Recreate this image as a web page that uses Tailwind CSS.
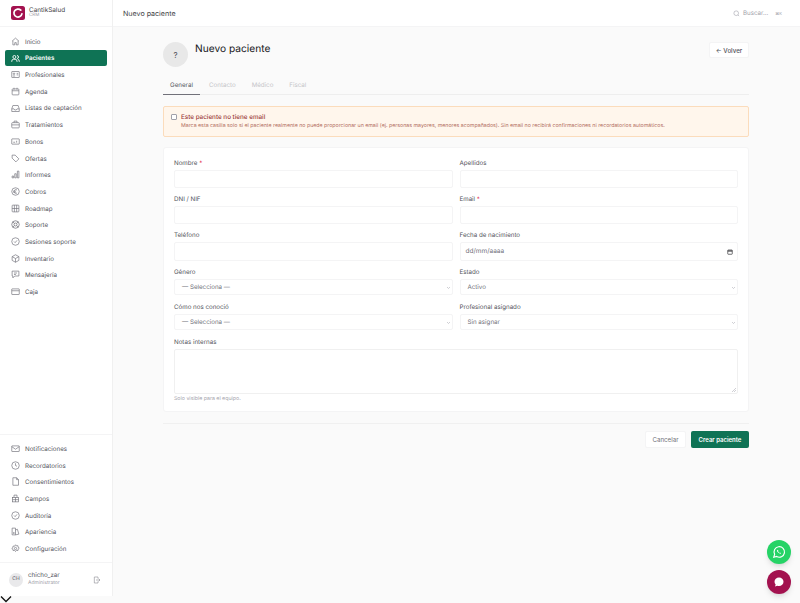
<!DOCTYPE html>
<html lang="es">
<head>
    <meta charset="UTF-8">
    <title>Nuevo paciente</title>
    <script src="https://cdn.jsdelivr.net/npm/@tailwindcss/browser@4"></script>
</head>
<body class="h-[603px] w-[800px] overflow-hidden bg-[#fafafa] font-['Inter',sans-serif] text-[#3f3f46] antialiased [text-rendering:geometricPrecision]">
<div class="flex h-full">
    <!-- Sidebar -->
    <aside class="flex h-[596px] w-[113px] shrink-0 flex-col border-r border-[#f0f0f0] bg-white">
        <div class="flex h-[27px] shrink-0 items-center gap-[4px] border-b border-[#f4f4f5] pl-[11px]">
            <svg class="h-[14px] w-[14px]" viewBox="0 0 14 14"><rect width="14" height="14" rx="2.5" fill="#a3124f"/><path d="M9.8 4.2A4 4 0 1 0 10.9 7.8" fill="none" stroke="#fff" stroke-width="1.7" stroke-linecap="round"/></svg>
            <div class="leading-none">
                <div class="text-[6.4px] text-[#3f3f46]">CantikSalud</div>
                <div class="mt-[1px] text-[4.5px] text-[#a1a1aa]">CRM</div>
            </div>
        </div>
        <nav class="flex shrink-0 flex-col px-[5px] pt-[6px] text-[6.2px] text-[#52525b] [&>a]:pt-[2px] [&_svg]:-translate-y-[1px]">
            <a class="flex h-[16.7px] items-center gap-[5.5px] pl-[5.5px]"><svg class="h-[9px] w-[9px]" viewBox="0 0 24 24" fill="none" stroke="#71717a" stroke-width="1.8"><path d="M3 11l9-8 9 8M5 10v11h5v-6h4v6h5V10"/></svg>Inicio</a>
            <a class="flex h-[16.7px] items-center gap-[5.5px] rounded-[2px] bg-[#0f7355] pl-[5.5px] font-semibold text-white"><svg class="h-[9px] w-[9px]" viewBox="0 0 24 24" fill="none" stroke="#fff" stroke-width="2.4"><circle cx="9" cy="8" r="4"/><path d="M2 21v-2a5 5 0 0 1 5-5h4a5 5 0 0 1 5 5v2M16 4a4 4 0 0 1 0 8M18 14a5 5 0 0 1 4 5v2"/></svg>Pacientes</a>
            <a class="flex h-[16.7px] items-center gap-[5.5px] pl-[5.5px]"><svg class="h-[9px] w-[9px]" viewBox="0 0 24 24" fill="none" stroke="#71717a" stroke-width="1.8"><rect x="2" y="4" width="20" height="16" rx="1"/><circle cx="8" cy="10" r="2"/><path d="M5 16h6M15 9h4M15 13h4"/></svg>Profesionales</a>
            <a class="flex h-[16.7px] items-center gap-[5.5px] pl-[5.5px]"><svg class="h-[9px] w-[9px]" viewBox="0 0 24 24" fill="none" stroke="#71717a" stroke-width="1.8"><rect x="3" y="5" width="18" height="16" rx="2"/><path d="M3 10h18M8 2v5M16 2v5"/></svg>Agenda</a>
            <a class="flex h-[16.7px] items-center gap-[5.5px] pl-[5.5px]"><svg class="h-[9px] w-[9px]" viewBox="0 0 24 24" fill="none" stroke="#71717a" stroke-width="1.8"><path d="M5 4h14l3 9v7H2v-7zM2 13h6l2 3h4l2-3h6"/></svg>Listas de captación</a>
            <a class="flex h-[16.7px] items-center gap-[5.5px] pl-[5.5px]"><svg class="h-[9px] w-[9px]" viewBox="0 0 24 24" fill="none" stroke="#71717a" stroke-width="1.8"><rect x="2" y="7" width="20" height="14" rx="2"/><path d="M8 7V3h8v4M2 13h20"/></svg>Tratamientos</a>
            <a class="flex h-[16.7px] items-center gap-[5.5px] pl-[5.5px]"><svg class="h-[9px] w-[9px]" viewBox="0 0 24 24" fill="none" stroke="#71717a" stroke-width="1.8"><rect x="2" y="5" width="20" height="14" rx="1"/><path d="M6 14h5M15 10v5"/></svg>Bonos</a>
            <a class="flex h-[16.7px] items-center gap-[5.5px] pl-[5.5px]"><svg class="h-[9px] w-[9px]" viewBox="0 0 24 24" fill="none" stroke="#71717a" stroke-width="1.8"><path d="M3 3h8l10 10-8 8L3 11zM7.5 7.5h.01"/></svg>Ofertas</a>
            <a class="flex h-[16.7px] items-center gap-[5.5px] pl-[5.5px]"><svg class="h-[9px] w-[9px]" viewBox="0 0 24 24" fill="none" stroke="#71717a" stroke-width="1.8"><path d="M3 21v-5h4v5zM10 21V10h4v11zM17 21V3h4v18z"/></svg>Informes</a>
            <a class="flex h-[16.7px] items-center gap-[5.5px] pl-[5.5px]"><svg class="h-[9px] w-[9px]" viewBox="0 0 24 24" fill="none" stroke="#71717a" stroke-width="1.8"><circle cx="12" cy="12" r="10"/><path d="M16 8a5 5 0 1 0 0 8M6 11h7M6 14h7"/></svg>Cobros</a>
            <a class="flex h-[16.7px] items-center gap-[5.5px] pl-[5.5px]"><svg class="h-[9px] w-[9px]" viewBox="0 0 24 24" fill="none" stroke="#71717a" stroke-width="1.8"><rect x="3" y="3" width="18" height="18" rx="2"/><path d="M9 3v18M15 3v18M3 12h18"/></svg>Roadmap</a>
            <a class="flex h-[16.7px] items-center gap-[5.5px] pl-[5.5px]"><svg class="h-[9px] w-[9px]" viewBox="0 0 24 24" fill="none" stroke="#71717a" stroke-width="2"><circle cx="12" cy="12" r="10"/><circle cx="12" cy="12" r="4"/><path d="M5 5l4 4M19 5l-4 4M5 19l4-4M19 19l-4-4"/></svg>Soporte</a>
            <a class="flex h-[16.7px] items-center gap-[5.5px] pl-[5.5px]"><svg class="h-[9px] w-[9px]" viewBox="0 0 24 24" fill="none" stroke="#71717a" stroke-width="1.8"><circle cx="12" cy="12" r="10"/><path d="M8 12l3 3 5-6"/></svg>Sesiones soporte</a>
            <a class="flex h-[16.7px] items-center gap-[5.5px] pl-[5.5px]"><svg class="h-[9px] w-[9px]" viewBox="0 0 24 24" fill="none" stroke="#71717a" stroke-width="1.8"><path d="M12 2l9 5v10l-9 5-9-5V7zM3 7l9 5 9-5M12 12v10"/></svg>Inventario</a>
            <a class="flex h-[16.7px] items-center gap-[5.5px] pl-[5.5px]"><svg class="h-[9px] w-[9px]" viewBox="0 0 24 24" fill="none" stroke="#71717a" stroke-width="1.8"><path d="M3 3h18v13H10l-5 5v-5H3zM8 8h8M8 12h5"/></svg>Mensajería</a>
            <a class="flex h-[16.7px] items-center gap-[5.5px] pl-[5.5px]"><svg class="h-[9px] w-[9px]" viewBox="0 0 24 24" fill="none" stroke="#71717a" stroke-width="1.8"><rect x="2" y="5" width="20" height="15" rx="1"/><path d="M2 10h20"/></svg>Caja</a>
        </nav>
        <div class="mt-auto flex flex-col border-t border-[#f4f4f5] px-[5px] pt-[5px] pb-[5px] text-[6.2px] text-[#52525b] [&>a]:pt-[2px] [&_svg]:-translate-y-[1px]">
            <a class="flex h-[16.7px] items-center gap-[5.5px] pl-[5.5px]"><svg class="h-[9px] w-[9px]" viewBox="0 0 24 24" fill="none" stroke="#71717a" stroke-width="1.8"><rect x="2" y="5" width="20" height="15" rx="1"/><path d="M2 7l10 7 10-7"/></svg>Notificaciones</a>
            <a class="flex h-[16.7px] items-center gap-[5.5px] pl-[5.5px]"><svg class="h-[9px] w-[9px]" viewBox="0 0 24 24" fill="none" stroke="#71717a" stroke-width="1.8"><circle cx="12" cy="12" r="10"/><path d="M12 6v6l4 2"/></svg>Recordatorios</a>
            <a class="flex h-[16.7px] items-center gap-[5.5px] pl-[5.5px]"><svg class="h-[9px] w-[9px]" viewBox="0 0 24 24" fill="none" stroke="#71717a" stroke-width="1.8"><path d="M5 2h10l5 5v15H5zM15 2v5h5"/></svg>Consentimientos</a>
            <a class="flex h-[16.7px] items-center gap-[5.5px] pl-[5.5px]"><svg class="h-[9px] w-[9px]" viewBox="0 0 24 24" fill="none" stroke="#71717a" stroke-width="1.8"><rect x="4" y="9" width="16" height="12"/><path d="M8 9V3h8v6M4 15h16M12 9v12"/></svg>Campos</a>
            <a class="flex h-[16.7px] items-center gap-[5.5px] pl-[5.5px]"><svg class="h-[9px] w-[9px]" viewBox="0 0 24 24" fill="none" stroke="#71717a" stroke-width="1.8"><circle cx="12" cy="12" r="10"/><path d="M8 12l3 3 5-6"/></svg>Auditoría</a>
            <a class="flex h-[16.7px] items-center gap-[5.5px] pl-[5.5px]"><svg class="h-[9px] w-[9px]" viewBox="0 0 24 24" fill="none" stroke="#71717a" stroke-width="1.8"><path d="M3 3h9v18H3zM12 8l5-2 4 13-9 2"/><circle cx="7.500" cy="16" r="1.500"/></svg>Apariencia</a>
            <a class="flex h-[16.7px] items-center gap-[5.5px] pl-[5.5px]"><svg class="h-[9px] w-[9px]" viewBox="0 0 24 24" fill="none" stroke="#71717a" stroke-width="1.8"><circle cx="12" cy="12" r="3"/><path d="M12 2l2.500 3 4-.5.500 4 3 2.500-3 2.500-.500 4-4-.500-2.500 3-2.500-3-4 .500-.500-4L2 12l3-2.500.500-4 4 .500z"/></svg>Configuración</a>
        </div>
        <div class="flex h-[34px] shrink-0 items-center border-t border-[#f4f4f5] pl-[9px] pr-[11px]">
            <div class="flex h-[14px] w-[14px] items-center justify-center rounded-full bg-[#e9e9eb] text-[5px] text-[#52525b]">CH</div>
            <div class="ml-[5px] leading-none">
                <div class="text-[6.2px] text-[#52525b]">chicho_zar</div>
                <div class="mt-[2.5px] text-[5px] text-[#a1a1aa]">Administrator</div>
            </div>
            <svg class="ml-auto h-[8px] w-[8px]" viewBox="0 0 24 24" fill="none" stroke="#8a8a92" stroke-width="1.8"><path d="M15 8V3H4v18h11v-5M9 12h12M17 8l4 4-4 4"/></svg>
        </div>
    </aside>

    <!-- Main -->
    <div class="flex min-w-0 flex-1 flex-col">
        <header class="flex h-[27px] shrink-0 items-center border-b border-[#f4f4f5] bg-white pl-[10px] pr-[18px]">
            <span class="pt-[2px] text-[7.1px] text-[#3f3f46]">Nuevo paciente</span>
            <svg class="ml-auto h-[7px] w-[7px]" viewBox="0 0 24 24" fill="none" stroke="#a1a1aa" stroke-width="2"><circle cx="11" cy="11" r="8"/><path d="M21 21l-4-4"/></svg>
            <span class="ml-[3px] pt-[2px] text-[6.2px] text-[#a1a1aa]">Buscar...</span>
            <span class="ml-[7px] pt-[2px] text-[4px] text-[#a1a1aa]">⌘K</span>
        </header>

        <main class="pl-[50px] pr-[51px]">
            <div class="flex items-start pt-[15px]">
                <div class="flex h-[25px] w-[25px] items-center justify-center rounded-full bg-[#e8e8e8] text-[8px] text-[#52525b]">?</div>
                <h1 class="ml-[7px] mt-[-1px] text-[10.2px] leading-[16px] text-[#18181b]">Nuevo paciente</h1>
                <button class="ml-auto flex h-[16px] w-[40px] items-center justify-center gap-[2px] rounded-[2px] border border-[#f4f4f5] bg-white pt-[2px] text-[6.2px] font-medium text-[#52525b]">← Volver</button>
            </div>

            <div class="mt-[12px] flex h-[16px] items-start gap-[16px] border-b border-[#eeeeee] text-[6.2px] text-[#c4c4c8]">
                <span class="mr-[-7px] h-[16px] w-[37px] border-b border-[#71717a] pt-[2px] text-center text-[#52525b]">General</span>
                <span class="pt-[2px]">Contacto</span>
                <span class="pt-[2px]">Médico</span>
                <span class="pt-[2px]">Fiscal</span>
            </div>

            <div class="mt-[11px] flex h-[31px] rounded-[2px] border border-[#fbdcbc] bg-[#fff6ec] pl-[7px] pt-[6px]">
                <span class="mt-[1px] h-[6px] w-[6px] rounded-[1px] border border-[#a1a1aa] bg-white"></span>
                <div class="ml-[4px]">
                    <div class="text-[6.3px] font-medium leading-[9px] text-[#9a3b3b]">Este paciente no tiene email</div>
                    <div class="mt-[1px] text-[5.25px] leading-[7px] text-[#b0695a]">Marca esta casilla solo si el paciente realmente no puede proporcionar un email (ej. personas mayores, menores acompañados). Sin email no recibirá confirmaciones ni recordatorios automáticos.</div>
                </div>
            </div>

            <section class="mt-[10px] h-[265px] rounded-[3px] border border-[#f4f4f5] bg-white px-[10px] pt-[11px]">
                <div class="grid grid-cols-2 gap-x-[7px] text-[6.2px] text-[#52525b]">
                    <div class="h-[36px]">
                        <div class="h-[11px] leading-[10px]">Nombre <span class="text-[#e11d48]">*</span></div>
                        <div class="h-[18px] rounded-[2px] border border-[#f4f4f5] bg-white"></div>
                    </div>
                    <div class="h-[36px]">
                        <div class="h-[11px] leading-[10px]">Apellidos</div>
                        <div class="h-[18px] rounded-[2px] border border-[#f4f4f5] bg-white"></div>
                    </div>
                    <div class="h-[36px]">
                        <div class="h-[11px] leading-[10px]">DNI / NIF</div>
                        <div class="h-[18px] rounded-[2px] border border-[#f4f4f5] bg-white"></div>
                    </div>
                    <div class="h-[36px]">
                        <div class="h-[11px] leading-[10px]">Email <span class="text-[#e11d48]">*</span></div>
                        <div class="h-[18px] rounded-[2px] border border-[#f4f4f5] bg-white"></div>
                    </div>
                    <div class="h-[37px]">
                        <div class="h-[11px] leading-[10px]">Teléfono</div>
                        <div class="h-[19px] rounded-[2px] border border-[#f4f4f5] bg-white"></div>
                    </div>
                    <div class="h-[37px]">
                        <div class="h-[11px] leading-[10px]">Fecha de nacimiento</div>
                        <div class="flex h-[19px] items-center justify-between rounded-[2px] border border-[#f4f4f5] bg-white pl-[5px] pr-[4px] text-[6.5px] text-[#71717a]">dd/mm/aaaa
                            <svg class="h-[6px] w-[6px]" viewBox="0 0 12 12" fill="none" stroke="#27272a" stroke-width="1.300"><rect x="1.500" y="2" width="9" height="8.500" rx="1"/><path d="M1.500 4h9" stroke-width="2"/></svg>
                        </div>
                    </div>
                    <div class="h-[35px]">
                        <div class="h-[11px] leading-[10px]">Género</div>
                        <div class="flex h-[16px] items-center justify-between rounded-[2px] border border-[#f4f4f5] bg-white pl-[7px] pr-[1px] pt-[2px] text-[#71717a]">— Selecciona —
                            <svg class="h-[5px] w-[5px] -translate-y-[1px]" viewBox="0 0 10 10" fill="none" stroke="#a1a1aa" stroke-width="1"><path d="M2 4l3 3 3-3"/></svg>
                        </div>
                    </div>
                    <div class="h-[35px]">
                        <div class="h-[11px] leading-[10px]">Estado</div>
                        <div class="flex h-[16px] items-center justify-between rounded-[2px] border border-[#f4f4f5] bg-white pl-[7px] pr-[1px] pt-[2px] text-[#71717a]">Activo
                            <svg class="h-[5px] w-[5px] -translate-y-[1px]" viewBox="0 0 10 10" fill="none" stroke="#a1a1aa" stroke-width="1"><path d="M2 4l3 3 3-3"/></svg>
                        </div>
                    </div>
                    <div class="h-[35px]">
                        <div class="h-[11px] leading-[10px]">Cómo nos conoció</div>
                        <div class="flex h-[16px] items-center justify-between rounded-[2px] border border-[#f4f4f5] bg-white pl-[7px] pr-[1px] pt-[2px] text-[#71717a]">— Selecciona —
                            <svg class="h-[5px] w-[5px] -translate-y-[1px]" viewBox="0 0 10 10" fill="none" stroke="#a1a1aa" stroke-width="1"><path d="M2 4l3 3 3-3"/></svg>
                        </div>
                    </div>
                    <div class="h-[35px]">
                        <div class="h-[11px] leading-[10px]">Profesional asignado</div>
                        <div class="flex h-[16px] items-center justify-between rounded-[2px] border border-[#f4f4f5] bg-white pl-[7px] pr-[1px] pt-[2px] text-[#71717a]">Sin asignar
                            <svg class="h-[5px] w-[5px] -translate-y-[1px]" viewBox="0 0 10 10" fill="none" stroke="#a1a1aa" stroke-width="1"><path d="M2 4l3 3 3-3"/></svg>
                        </div>
                    </div>
                    <div class="col-span-2">
                        <div class="h-[11px] leading-[10px]">Notas internas</div>
                        <div class="relative h-[45px] rounded-[2px] border border-[#f0f0f0] bg-white">
                            <svg class="absolute bottom-[1px] right-[1px] h-[4px] w-[4px]" viewBox="0 0 4 4" stroke="#a1a1aa" stroke-width=".5"><path d="M0 4l4-4M2 4l2-2"/></svg>
                        </div>
                        <div class="mt-[2px] text-[5.25px] text-[#a1a1aa]">Solo visible para el equipo.</div>
                    </div>
                </div>
            </section>

            <div class="mt-[11px] flex justify-end gap-[5px] border-t border-[#f0f0f0] pt-[7px]">
                <button class="h-[16.5px] w-[41px] rounded-[2px] border border-[#f4f4f5] bg-white pt-[1px] text-[6.2px] text-[#71717a]">Cancelar</button>
                <button class="h-[16.5px] w-[58px] rounded-[2px] bg-[#0f7355] pt-[1px] text-[6px] font-semibold text-white">Crear paciente</button>
            </div>
        </main>
    </div>
</div>

<!-- Floating buttons -->
<div class="absolute left-[767px] top-[540px] flex h-[24px] w-[24px] items-center justify-center rounded-full bg-[#25d366] shadow-md">
    <svg class="h-[14px] w-[14px]" viewBox="0 0 24 24" fill="none" stroke="#fff" stroke-width="2"><path d="M3 21l1.500-5A9 9 0 1 1 8 19.700z"/><path d="M9 8c-1 1-.5 3 1.500 5s4 2.500 5 1.500l-1.500-1.500-1 .500-2.500-2.500.500-1z" fill="#fff" stroke="none"/></svg>
</div>
<div class="absolute left-[767px] top-[570px] flex h-[24px] w-[24px] items-center justify-center rounded-full bg-[#a3124f] shadow-md">
    <svg class="h-[12px] w-[12px]" viewBox="0 0 24 24" fill="#fff"><path d="M12 3c5 0 9 3.600 9 8.500S17 20 12 20c-1.200 0-2.300-.200-3.300-.500L4 21l1.300-4A8 8 0 0 1 3 11.500C3 6.600 7 3 12 3z"/></svg>
</div>
<svg class="absolute left-0 top-[595px] h-[8px] w-[12px]" viewBox="0 0 12 8" fill="none" stroke="#111" stroke-width="1.300"><path d="M1 1.500l5 5 5-5"/></svg>
</body>
</html>
